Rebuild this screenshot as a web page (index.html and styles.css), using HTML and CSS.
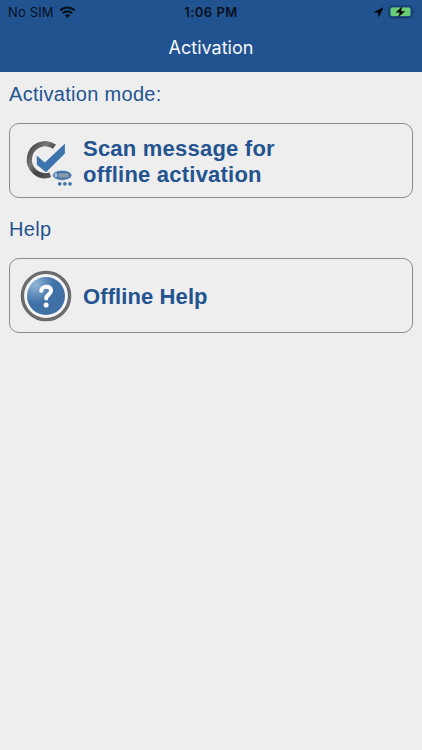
FILE: index.html
```html
<!DOCTYPE html>
<html lang="en">
<head>
    <meta charset="utf-8">
    <meta name="viewport" content="width=device-width, initial-scale=1">
    <title>Activation</title>
    <link rel="stylesheet" href="styles.css">
</head>
<body>
    <header class="header">
        <div class="status-bar">
            <div class="status-left">
                <span class="carrier">No SIM</span>
                <svg class="wifi" viewBox="0 0 17 12" width="17" height="12">
                    <path d="M1.2 4.5C5.3.5 11.7.5 15.8 4.5" />
                    <path d="M3.8 7.2c2.7-2.5 6.7-2.5 9.4 0" />
                    <path class="wifi-dot" d="M5.8 9.2c1.6-1.3 3.8-1.3 5.4 0L8.5 12z" />
                </svg>
            </div>
            <span class="clock">1:06 PM</span>
            <div class="status-right">
                <svg class="location" viewBox="0 0 11 11" width="11" height="11">
                    <path d="M10.6.3L.2 5.2l4.9.4.5 5z" />
                </svg>
                <svg class="battery" viewBox="0 0 28 14" width="28" height="14">
                    <rect class="battery-case" x="1" y="1" width="23" height="11.6" rx="3" />
                    <rect class="battery-level" x="2.6" y="2.6" width="19.8" height="8.4" rx="1.5" />
                    <path class="battery-cap" d="M25.5 5c1.6.5 1.6 3.2 0 3.7z" />
                    <path class="battery-bolt" d="M14.4 1.3L7.6 7.4h4.1l-1.5 4.9 7-6h-4.1z" />
                </svg>
            </div>
        </div>
        <h1 class="title">Activation</h1>
    </header>

    <main class="content">
        <h2 class="section-title section-mode">Activation mode:</h2>
        <button class="card" type="button">
            <svg class="card-icon" viewBox="0 0 52 52" width="52" height="52">
                <defs>
                    <linearGradient id="ring" x1="0" y1="0" x2="1" y2="1">
                        <stop offset="0" stop-color="#3e3e40" />
                        <stop offset=".35" stop-color="#77777a" />
                        <stop offset=".6" stop-color="#434345" />
                        <stop offset="1" stop-color="#59595b" />
                    </linearGradient>
                </defs>
                <path class="ring" d="M34.5 11.6A16 16 0 1 0 30.3 39.9" />
                <path class="check" d="M16.8 20.6l8 6.9L44.9 8.8v9.8L26 37.2l-9.2-7.4z" />
                <ellipse class="token" cx="42.2" cy="40.3" rx="9.7" ry="5.1" />
                <ellipse class="token-button" cx="35.9" cy="40.3" rx="1.2" ry="2.4" />
                <rect class="token-screen" x="38.4" y="38.2" width="10.2" height="4.2" rx="1" />
                <circle class="token-dot" cx="39.7" cy="48.8" r="1.9" />
                <circle class="token-dot" cx="44.9" cy="48.8" r="1.9" />
                <circle class="token-dot" cx="50" cy="48.8" r="1.9" />
            </svg>
            <span class="card-label card-label-scan">Scan message for<br>offline activation</span>
        </button>

        <h2 class="section-title section-help">Help</h2>
        <button class="card" type="button">
            <svg class="card-icon" viewBox="0 0 52 52" width="52" height="52">
                <defs>
                    <radialGradient id="ball" cx=".22" cy=".2" r=".5">
                        <stop offset="0" stop-color="#91b5d8" />
                        <stop offset="1" stop-color="#3f70a6" />
                    </radialGradient>
                </defs>
                <circle class="help-ring" cx="26" cy="26" r="23.6" />
                <circle cx="26" cy="26" r="19" fill="url(#ball)" />
                <path class="help-mark" d="M21.2 20.8c.3-5.4 9.8-5.6 9.9-.1 0 3.6-4.9 3.8-4.9 7.9" />
                <circle class="help-dot" cx="26.1" cy="34.9" r="2.5" />
            </svg>
            <span class="card-label">Offline Help</span>
        </button>
    </main>
</body>
</html>
```
FILE: styles.css
```css
* {
    box-sizing: border-box;
}

body {
    margin: 0;
    min-height: 100vh;
    background-color: #eeeeee;
    color: #23548f;
    font-family: "Liberation Sans", Arial, sans-serif;
}

.header {
    height: 72px;
    background-color: #225391;
    font-family: Inter, sans-serif;
}

.status-bar {
    display: grid;
    grid-template-columns: 1fr auto 1fr;
    align-items: center;
    height: 23px;
    padding: 0 6px 0 8px;
    color: #07101d;
    font-size: 13px;
}

.status-left,
.status-right {
    display: flex;
    align-items: center;
}

.status-left {
    gap: 5px;
}

.status-right {
    justify-content: flex-end;
    gap: 4px;
}

.carrier {
    letter-spacing: 0.15px;
}

.clock {
    margin-left: -2px;
    font-weight: 600;
    letter-spacing: 0.5px;
}

.wifi path {
    fill: none;
    stroke: #07101d;
    stroke-width: 2.1;
}

.wifi .wifi-dot {
    fill: #07101d;
    stroke: none;
}

.location {
    margin-top: 1px;
    fill: #000;
}

.battery-case {
    fill: none;
    stroke: #17375f;
    stroke-width: 1.2;
}

.battery-level {
    fill: #68cd73;
}

.battery-cap {
    fill: #17375f;
}

.battery-bolt {
    fill: #000;
}

.title {
    margin: 0;
    color: #f5f8fc;
    font-size: 18px;
    font-weight: 400;
    line-height: 50px;
    text-align: center;
}

.content {
    padding: 0 9px;
}

.section-title {
    margin: 0;
    font-size: 20px;
    font-weight: 400;
    line-height: 24px;
    letter-spacing: 0.3px;
}

.section-mode {
    padding: 10px 0 17px;
}

.section-help {
    padding: 19px 0 17px;
}

.card {
    display: flex;
    align-items: center;
    gap: 11px;
    width: 100%;
    height: 75px;
    padding: 0 10px;
    border: 1px solid #8c8c8c;
    border-radius: 10px;
    background-color: #eeeeee;
    color: #23548f;
    font-family: inherit;
    text-align: left;
}

.card-icon {
    flex: none;
}

.card-label {
    padding-top: 2px;
    font-size: 22px;
    font-weight: 700;
    line-height: 26px;
    letter-spacing: 0.1px;
}

.card-label-scan {
    letter-spacing: 0.22px;
}

.ring {
    fill: none;
    stroke: url(#ring);
    stroke-width: 5.2;
}

.check {
    fill: #3e74ad;
}

.token {
    fill: #4377ab;
    stroke: #eeeeee;
    stroke-width: 0.8;
}

.token-button {
    fill: #b3c8dd;
}

.token-screen {
    fill: #8b9aaa;
}

.token-dot {
    fill: #4377ab;
}

.help-ring {
    fill: #f3f5f8;
    stroke: #6d6c6c;
    stroke-width: 3.4;
}

.help-mark {
    fill: none;
    stroke: #fff;
    stroke-width: 4;
    stroke-linecap: round;
}

.help-dot {
    fill: #fff;
}
```
